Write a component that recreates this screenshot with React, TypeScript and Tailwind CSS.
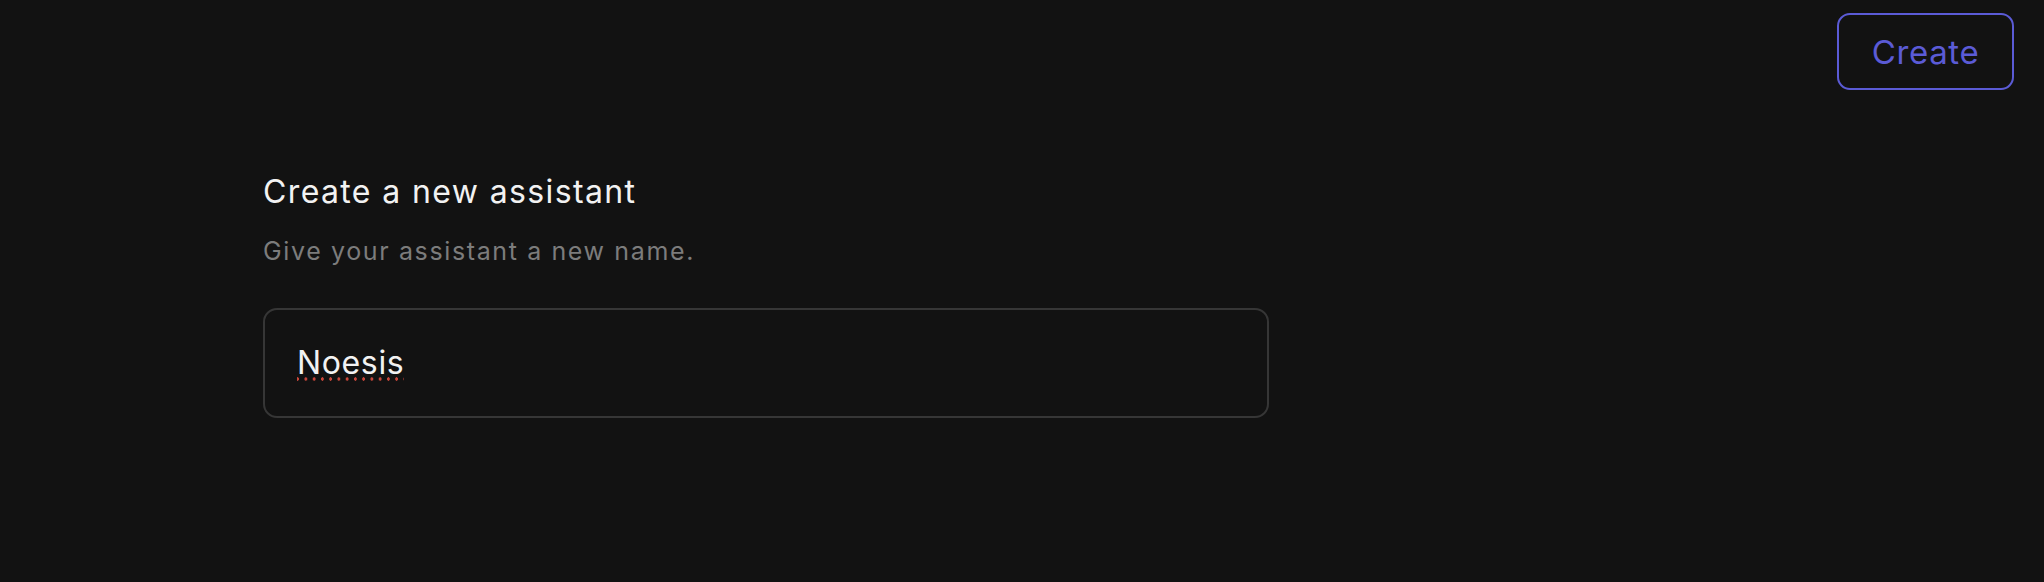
export default function App() {
  return (
    <div
      className="h-[582px] w-full bg-[#121212] text-white"
      style={{ fontFamily: "Inter, 'Noto Sans', sans-serif" }}
    >
      {/* Top bar */}
      <div className="flex justify-end pt-[13px] pr-[30px]">
        <button className="flex h-[77px] w-[177px] items-center justify-center rounded-[13px] border-2 border-[#5b5bd6] text-[33px] leading-[40px] tracking-[0.02em] text-[#5b5bd6]">
          Create
        </button>
      </div>

      {/* Form */}
      <div className="flex flex-col pl-[263px] pt-[82px]">
        <h1 className="text-[32px] leading-[40px] font-normal tracking-[0.043em] text-[#f2f2f2]">
          Create a new assistant
        </h1>
        <p className="mt-[23px] text-[25px] leading-[32px] tracking-[0.065em] text-[#7c7c7c]">
          Give your assistant a new name.
        </p>
        <div className="mt-[41px] flex h-[110px] w-[1006px] items-center rounded-[14px] border-2 border-[#363636] px-[32px]">
          <span className="inline-block bg-[radial-gradient(circle,#c8463a_1.6px,transparent_1.8px)] bg-[length:8.25px_4px] bg-[position:-3.5px_34px] bg-no-repeat bg-repeat-x text-[32px] leading-[40px] tracking-[0.02em] text-[#f2f2f2]">
            Noesis
          </span>
        </div>
      </div>
    </div>
  );
}
